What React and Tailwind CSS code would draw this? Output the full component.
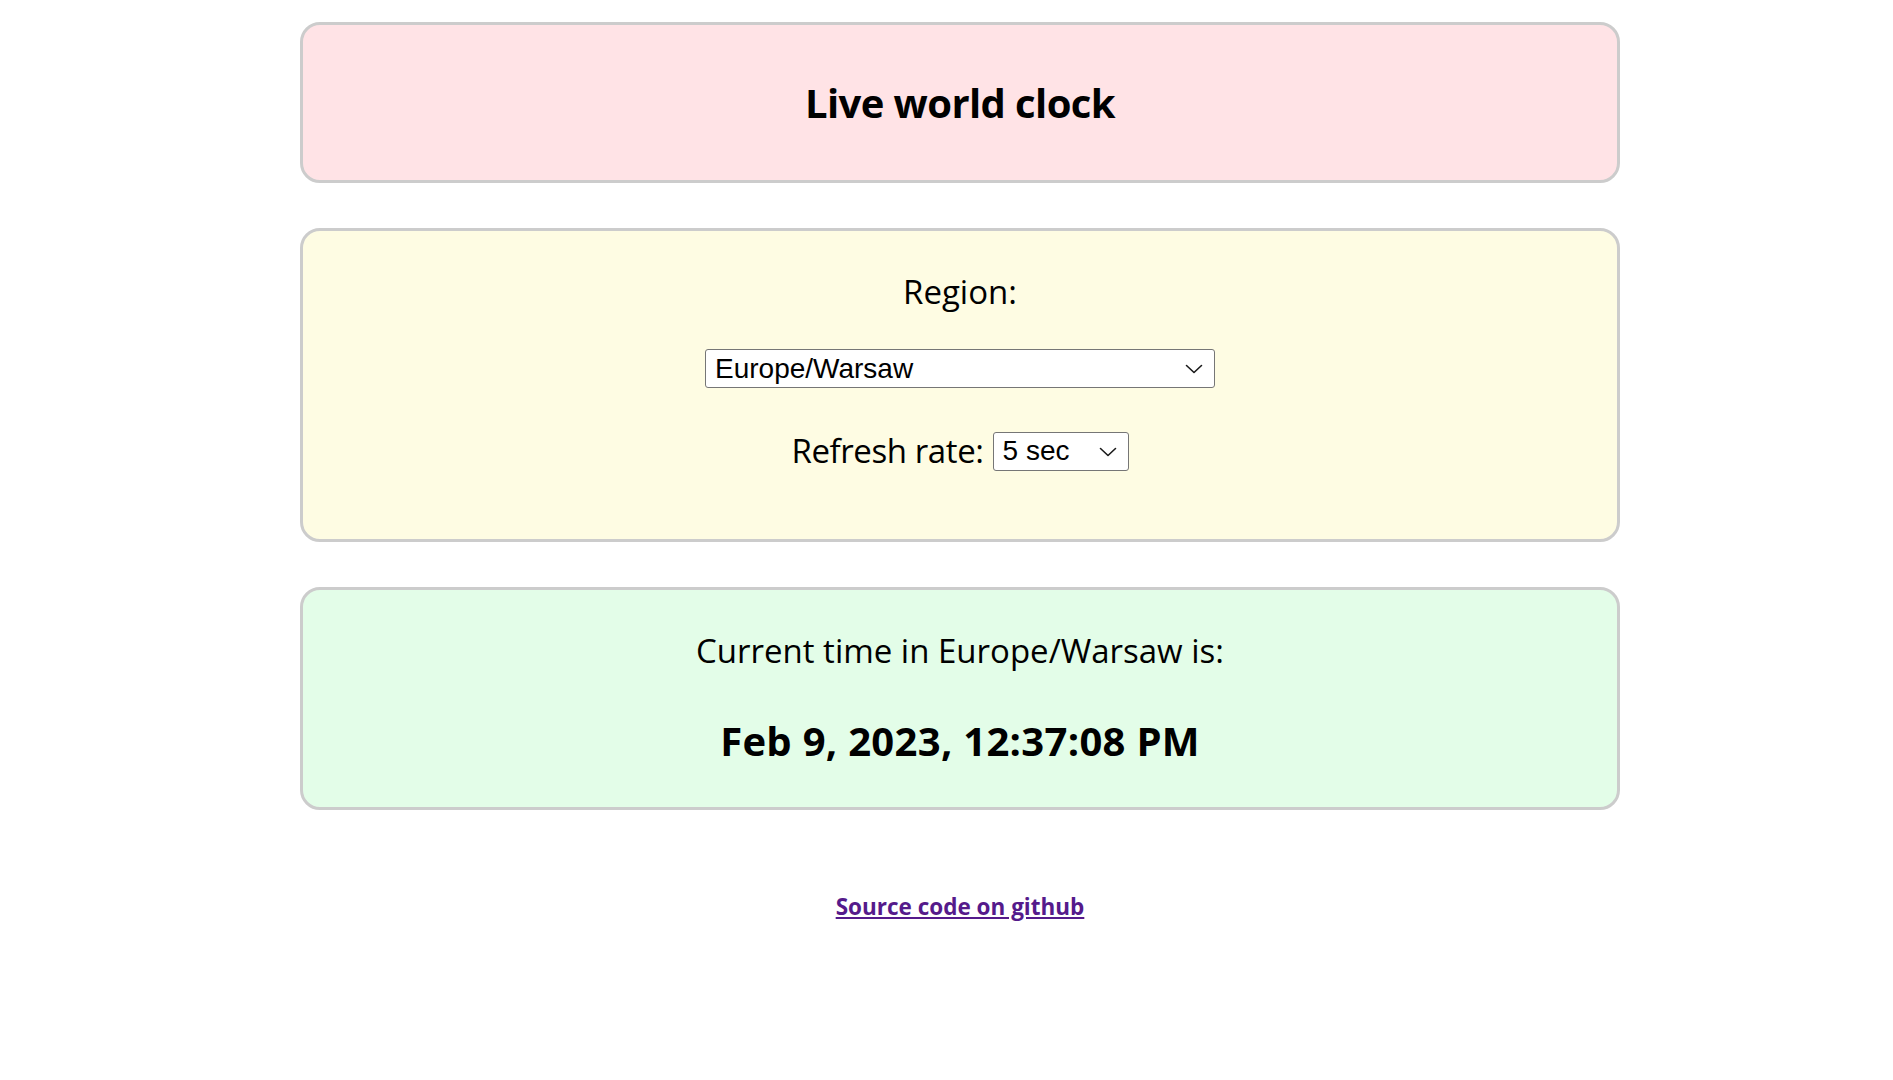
import React from "react";

function Chevron({ className }) {
  return (
    <svg className={className} width="18" height="10" viewBox="0 0 18 10" fill="none">
      <path d="M1.5 1.5 L9 8.5 L16.5 1.5" stroke="#1a1a1a" strokeWidth="1.6" strokeLinecap="round" strokeLinejoin="round" />
    </svg>
  );
}

export default function App() {
  return (
    <div className="min-h-screen bg-white text-black font-['Open_Sans',_'Noto_Sans',_sans-serif]">
      <div className="ml-[300px] w-[1320px] pt-[22px] flex flex-col">
        <div className="h-[161px] rounded-[20px] border-[3px] border-[#cccccc] bg-[#ffe3e6] flex items-center justify-center">
          <h1 className="text-[40px] font-bold leading-[48px] tracking-[-0.6px]">Live world clock</h1>
        </div>

        <div className="mt-[45px] h-[314px] rounded-[20px] border-[3px] border-[#cccccc] bg-[#fefce3] flex flex-col items-center pt-[41px]">
          <div className="text-[33px] leading-[40px]">Region:</div>
          <div className="relative mt-[37px]">
            <select
              defaultValue="Europe/Warsaw"
              className="appearance-none w-[510px] h-[39px] bg-white border border-[#767676] rounded-[3px] pl-[9px] pr-[40px] text-[28px] leading-[34px] text-black font-['Liberation_Sans',_Arial,_sans-serif] outline-none"
            >
              <option>Europe/Warsaw</option>
              <option>America/New_York</option>
              <option>Asia/Tokyo</option>
            </select>
            <Chevron className="absolute right-[12px] top-[15px] pointer-events-none" />
          </div>
          <div className="mt-[43px] flex items-center">
            <span className="text-[33px] leading-[40px] tracking-[-0.4px] mr-[9px]">Refresh rate:</span>
            <div className="relative">
              <select
                defaultValue="5 sec"
                className="appearance-none w-[136px] h-[39px] bg-white border border-[#767676] rounded-[3px] pl-[9px] pr-[30px] text-[28px] leading-[34px] text-black font-['Liberation_Sans',_Arial,_sans-serif] outline-none"
              >
                <option>1 sec</option>
                <option>5 sec</option>
                <option>10 sec</option>
              </select>
              <Chevron className="absolute right-[12px] top-[15px] pointer-events-none" />
            </div>
          </div>
        </div>

        <div className="mt-[45px] h-[223px] rounded-[20px] border-[3px] border-[#cccccc] bg-[#e3fde8] flex flex-col items-center pt-[41px]">
          <div className="text-[33px] leading-[40px]">Current time in Europe/Warsaw is:</div>
          <div className="mt-[46px] text-[40px] font-bold leading-[48px] tracking-[0.3px]">Feb 9, 2023, 12:37:08 PM</div>
        </div>

        <div className="mt-[82px] flex justify-center">
          <a href="#" className="text-[22.5px] font-bold leading-[30px] text-[#551a8b] underline">Source code on github</a>
        </div>
      </div>
    </div>
  );
}
